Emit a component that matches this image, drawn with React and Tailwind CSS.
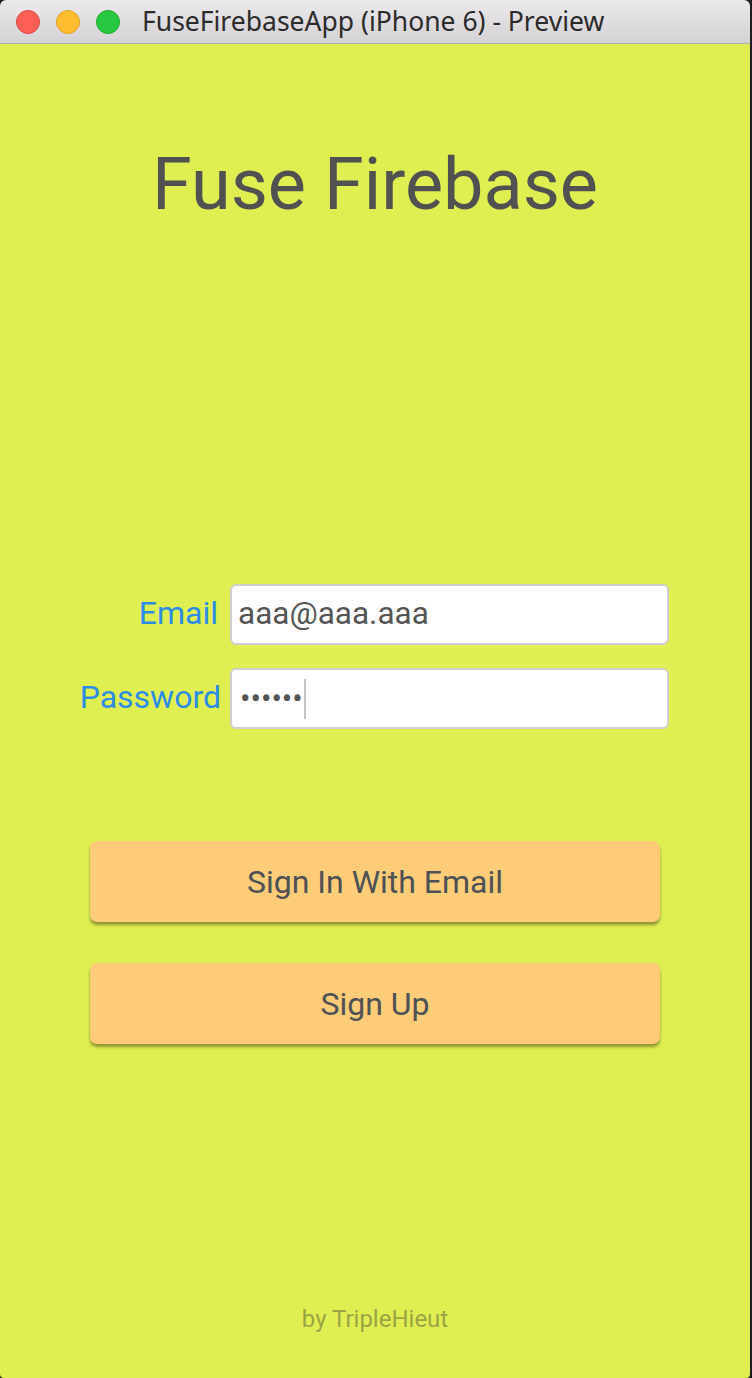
import React from 'react';

const App = () => {
  return (
    <div className="w-[752px] h-[1378px] bg-[#1e1e1e] overflow-hidden" style={{ fontFamily: 'Roboto, "Noto Sans", sans-serif' }}>
      <div className="w-[750px] h-[1378px] flex flex-col rounded-t-[6px] rounded-b-[4px] overflow-hidden">
        {/* Title bar */}
        <div className="h-[44px] shrink-0 flex items-center bg-gradient-to-b from-[#ebe9eb] to-[#d4d2d4] border-b border-[#b1afb1]">
          <div className="flex items-center gap-[16px] pl-[16px]">
            <span className="w-[24px] h-[24px] rounded-full bg-[#fe5f57] border border-[#e0443e]"></span>
            <span className="w-[24px] h-[24px] rounded-full bg-[#febc2e] border border-[#dea123]"></span>
            <span className="w-[24px] h-[24px] rounded-full bg-[#28c840] border border-[#1aab29]"></span>
          </div>
          <div className="ml-[22px] text-[26.5px] leading-none text-[#2b2b2b]" style={{ fontFamily: '"Noto Sans", sans-serif' }}>
            FuseFirebaseApp (iPhone 6) - Preview
          </div>
        </div>

        {/* App body */}
        <div className="flex-1 flex flex-col bg-[#dfef51]">
          <h1 className="mt-[106px] text-center text-[72px] leading-[70px] text-[#515151]">Fuse Firebase</h1>

          {/* Form */}
          <div className="mt-[364px] flex flex-col gap-[23px]">
            <div className="flex items-center gap-[9px]">
              <label className="w-[221px] pr-[3px] pb-[4px] text-right text-[32px] text-[#2c8ce6]">Email</label>
              <div className="w-[439px] h-[61px] bg-white border-2 border-[#cfcfcf] rounded-[6px] flex items-center pl-[6px] pb-[2px] text-[31.5px] text-[#555555]">
                aaa@aaa.aaa
              </div>
            </div>
            <div className="flex items-center gap-[9px]">
              <label className="w-[221px] pb-[4px] text-right text-[32px] text-[#2c8ce6]">Password</label>
              <div className="w-[439px] h-[61px] bg-white border-2 border-[#cfcfcf] rounded-[6px] flex items-center pl-[8px] text-[#555555]">
                <span className="text-[31px] leading-none">••••••</span>
                <span className="ml-[1px] w-[2px] h-[40px] bg-[#c4c4c4]"></span>
              </div>
            </div>
          </div>

          {/* Buttons */}
          <div className="mt-[112px] flex flex-col items-center gap-[41px]">
            <button className="w-[570px] h-[81px] rounded-[7px] bg-[#fecb78] text-[32px] text-[#4e5056] shadow-[0_3px_3px_rgba(80,80,30,0.55)]">
              Sign In With Email
            </button>
            <button className="w-[570px] h-[81px] rounded-[7px] bg-[#fecb78] text-[32px] text-[#4e5056] shadow-[0_3px_3px_rgba(80,80,30,0.55)]">
              Sign Up
            </button>
          </div>

          <div className="flex-1"></div>
          <div className="pb-[44px] text-center text-[24px] leading-[30px] text-[#9ba444]">by TripleHieut</div>
        </div>
      </div>
    </div>
  );
};

export default App;
